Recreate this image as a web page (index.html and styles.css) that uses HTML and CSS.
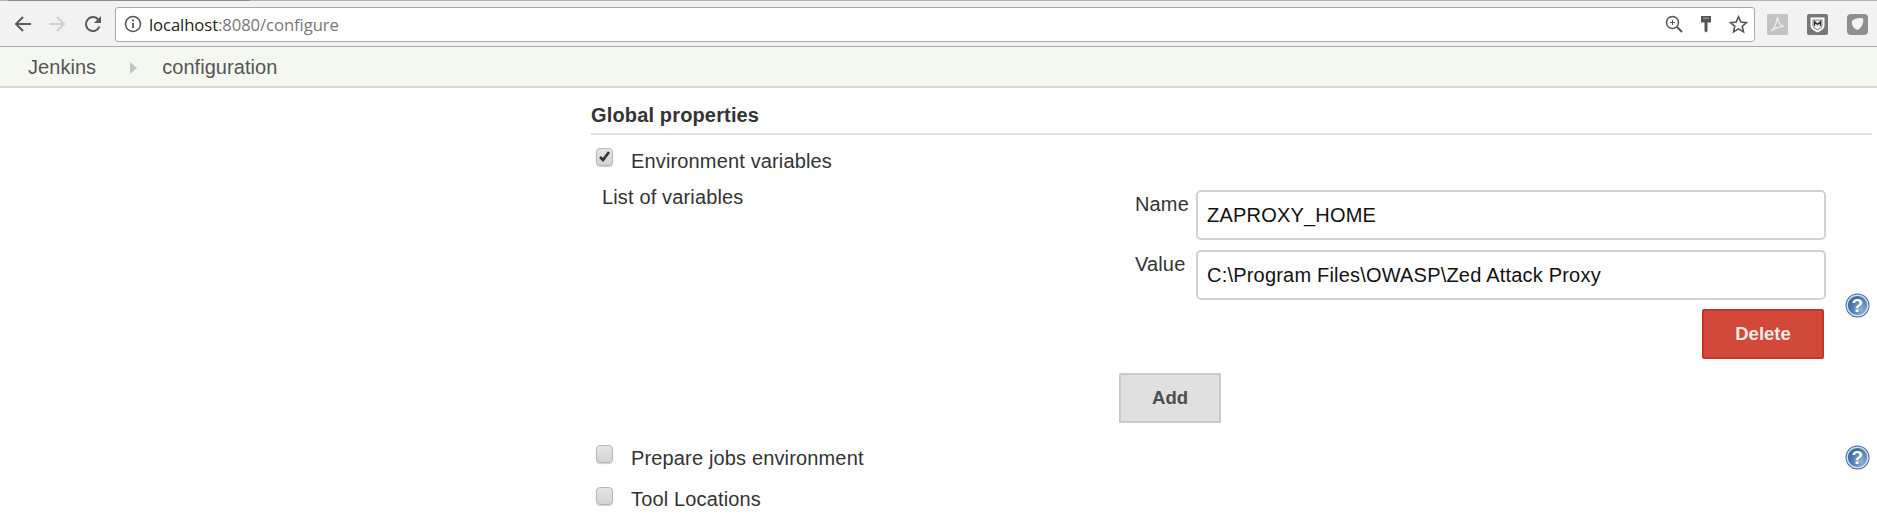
FILE: index.html
```html
<!DOCTYPE html>
<html lang="en">
<head>
<meta charset="utf-8">
<title>Jenkins configuration</title>
<link rel="stylesheet" href="styles.css">
</head>
<body>
<div class="tabstrip"><div class="tab-edge"></div></div>
<div class="toolbar">
  <svg class="nav" width="20" height="20" viewBox="0 0 20 20"><path d="M18 10H4M10 3l-7 7 7 7" fill="none" stroke="#5a5a5a" stroke-width="2"/></svg>
  <svg class="nav nav-fwd" width="20" height="20" viewBox="0 0 20 20"><path d="M2 10h14M10 3l7 7-7 7" fill="none" stroke="#cfcfcf" stroke-width="2"/></svg>
  <svg class="nav nav-reload" width="20" height="20" viewBox="0 0 20 20"><path d="M16.5 12.5A7 7 0 1 1 15 5.2" fill="none" stroke="#5a5a5a" stroke-width="2"/><path d="M18 2v7h-7z" fill="#5a5a5a"/></svg>
  <div class="omnibox">
    <svg class="info" width="18" height="18" viewBox="0 0 18 18"><circle cx="9" cy="9" r="7.5" fill="none" stroke="#555" stroke-width="1.6"/><path d="M9 8v5" stroke="#555" stroke-width="1.8"/><circle cx="9" cy="5.4" r="1.1" fill="#555"/></svg>
    <span class="url"><span class="host">localhost</span>:8080/configure</span>
    <span class="omni-icons">
      <svg width="18" height="18" viewBox="0 0 18 18"><circle cx="7.5" cy="7.5" r="6" fill="none" stroke="#555" stroke-width="1.5"/><path d="M12 12l5 5" stroke="#555" stroke-width="2"/><path d="M5 7.5h5M7.5 5v5" stroke="#555"/></svg>
      <svg width="12" height="18" viewBox="0 0 12 18"><path d="M1 1h10v6.500H7.500V16L6 17.500 4.500 16V7.500H1z" fill="#555"/><path d="M3 3.200h6" stroke="#aaa"/></svg>
      <svg width="19" height="19" viewBox="0 0 19 19"><path d="M9.500 1.800l2.300 5.200 5.700.6-4.300 3.700 1.300 5.600-5-3-5 3 1.300-5.600L1.500 7.600l5.700-.6z" fill="none" stroke="#555" stroke-width="1.600"/></svg>
    </span>
  </div>
  <div class="extensions">
    <svg width="21" height="21" viewBox="0 0 21 21"><rect width="21" height="21" rx="1" fill="#c4c4c4"/><path d="M4 17c3-2 5-6 6-12 0-2 1-2 1 0 0 4 3 7 6 7.500-4 0-8 1-13 4.500z" fill="none" stroke="#f2f2f2" stroke-width="1.200"/></svg>
    <svg width="21" height="21" viewBox="0 0 21 21"><rect width="21" height="21" rx="2" fill="#777"/><path d="M3.500 3.500h14v8c0 3-3 5-7 7-4-2-7-4-7-7z" fill="#fff"/><path d="M5.500 5.500h10v6c0 2-2 3.500-5 5-3-1.500-5-3-5-5z" fill="#888"/><path d="M6.500 6.500h8v5c0 1.500-1.500 2.500-4 4-2.500-1.500-4-2.500-4-4z" fill="#eee"/><path d="M7.500 12V7.500l3 3 3-3V12" fill="none" stroke="#333" stroke-width="1.300"/></svg>
    <svg width="21" height="21" viewBox="0 0 21 21"><rect width="21" height="21" rx="4" fill="#8e8e8e"/><path d="M5 7c2-2.500 8-4 11-2.500 1 4-1 9-5.500 11.500C7 15 4 11 5 7z" fill="#f4f4f4"/></svg>
  </div>
</div>
<nav class="breadcrumbs">
  <a class="crumb">Jenkins</a>
  <svg class="crumb-sep" width="7" height="12" viewBox="0 0 7 12"><path d="M0 0l7 6-7 6z" fill="#c4c4c4"/></svg>
  <a class="crumb">configuration</a>
</nav>
<main class="main">
  <h2 class="section-title">Global properties</h2>
  <label class="check-row check-row-first">
    <span class="checkbox"><svg width="17" height="17" viewBox="0 0 17 17"><path d="M4 9l3 3 6-8" fill="none" stroke="#333" stroke-width="2.600"/></svg></span>
    <span class="check-label">Environment variables</span>
  </label>
  <div class="env-grid">
    <div class="vars-label">List of variables</div>
    <div class="vars-fields">
      <div class="field">
        <label class="field-label">Name</label>
        <input class="text-input" type="text" value="ZAPROXY_HOME">
      </div>
      <div class="field field-last">
        <label class="field-label">Value</label>
        <input class="text-input" type="text" value="C:\Program Files\OWASP\Zed Attack Proxy">
      </div>
      <div class="delete-row"><button class="btn btn-delete">Delete</button></div>
      <button class="btn btn-add">Add</button>
    </div>
    <div class="help help-env">
      <svg class="help-icon" width="25" height="25" viewBox="0 0 25 25"><defs><radialGradient id="hg" cx="0.7" cy="0.7" r="0.9"><stop offset="0" stop-color="#8fb0d6"/><stop offset="1" stop-color="#1f4f8f"/></radialGradient></defs><circle cx="12.500" cy="12.500" r="12" fill="#3a68a4"/><circle cx="12.500" cy="12.500" r="10.300" fill="url(#hg)" stroke="#cfdcea" stroke-width="1.500"/><text x="12.500" y="19" class="help-mark">?</text></svg>
    </div>
  </div>
  <div class="option-row option-row-help">
    <label class="check-row">
      <span class="checkbox"></span>
      <span class="check-label">Prepare jobs environment</span>
    </label>
    <svg class="help-icon" width="25" height="25" viewBox="0 0 25 25"><circle cx="12.500" cy="12.500" r="12" fill="#3a68a4"/><circle cx="12.500" cy="12.500" r="10.300" fill="url(#hg)" stroke="#cfdcea" stroke-width="1.500"/><text x="12.500" y="19" class="help-mark">?</text></svg>
  </div>
  <label class="check-row check-row-last">
    <span class="checkbox"></span>
    <span class="check-label">Tool Locations</span>
  </label>
</main>
</body>
</html>
```
FILE: styles.css
```css
* { box-sizing: border-box; }
html, body { margin: 0; padding: 0; background: #fff; }
body {
  width: 1877px;
  height: 526px;
  overflow: hidden;
  font-family: "Liberation Sans", Arial, sans-serif;
  font-size: 20px;
  letter-spacing: 0.15px;
  color: #333;
}
.tabstrip { height: 1px; background: #b4b4b4; padding-left: 8px; }
.tab-edge { width: 242px; height: 1px; background: #8c8c8c; }
.toolbar {
  height: 46px;
  background: #f2f2f2;
  border-bottom: 1px solid #ababab;
  display: flex;
  align-items: center;
  padding-left: 13px;
  padding-top: 1px;
}
.nav { flex: none; }
.nav-fwd { margin-left: 14px; }
.nav-reload { margin-left: 16px; }
.omnibox {
  margin-left: 12px;
  width: 1640px;
  height: 35px;
  background: #fff;
  border: 1px solid #a9a9a9;
  border-radius: 3px;
  display: flex;
  align-items: center;
  padding-left: 8px;
  padding-right: 6px;
}
.url {
  margin-left: 7px;
  font-family: "Open Sans", "Liberation Sans", sans-serif;
  font-size: 16.700px;
  color: #777;
  letter-spacing: -0.1px;
}
.host { color: #222; }
.omni-icons {
  margin-left: auto;
  display: flex;
  align-items: center;
  gap: 17px;
}
.extensions {
  margin-left: 12px;
  display: flex;
  gap: 19px;
}
.breadcrumbs {
  height: 41px;
  background: #f5f8f1;
  border-bottom: 2px solid #d8d9d2;
  display: flex;
  align-items: center;
  padding-left: 28px;
  padding-top: 2px;
}
.crumb { color: #555; font-size: 20px; letter-spacing: 0.05px; }
.crumb-sep { margin: 0 25px 0 34px; }
.main { padding: 0 5px 0 591px; }
.section-title {
  margin: 0;
  height: 47px;
  padding-top: 16px;
  border-bottom: 2px solid #e0e0e0;
  font-size: 20px;
  line-height: 23px;
  font-weight: 700;
  color: #333;
}
.check-row { display: flex; align-items: flex-start; }
.check-row-first { margin-top: 13px; margin-left: 5px; height: 31px; }
.checkbox {
  flex: none;
  width: 17px;
  height: 18px;
  background: linear-gradient(#e6e6e6, #d2d2d2);
  border: 1px solid #b5b5b5;
  border-radius: 4px;
  box-shadow: 0 1px 1px #ccc;
  display: block;
}
.checkbox svg { display: block; margin: -1px 0 0 -1px; }
.check-label { margin-left: 18px; line-height: 23px; color: #333; }
.check-row-first .check-label { margin-top: 2px; }
.env-grid {
  display: grid;
  grid-template-columns: 528px 707px 1fr;
}
.vars-label { padding-left: 11px; padding-top: 7px; line-height: 23px; }
.vars-fields { padding-top: 11px; }
.field {
  display: flex;
  justify-content: flex-end;
  margin-bottom: 10px;
}
.field-last { margin-bottom: 9px; }
.field-label { width: 61px; padding-top: 3px; line-height: 23px; }
.text-input {
  width: 630px;
  height: 50px;
  border: 2px solid #d2d2d2;
  border-radius: 5px;
  background: #fff;
  padding: 0 9px;
  font-family: "Liberation Sans", Arial, sans-serif;
  font-size: 20px;
  letter-spacing: 0.2px;
  color: #111;
  outline: none;
}
.delete-row { display: flex; justify-content: flex-end; padding-right: 2px; }
.btn {
  display: block;
  width: 102px;
  height: 50px;
  font-family: "Liberation Sans", Arial, sans-serif;
  font-size: 18.500px;
  font-weight: 700;
  padding: 0;
}
.btn-delete {
  width: 122px;
  background: #d24939;
  border: 2px solid #c5352a;
  border-radius: 2px;
  color: #f4e8e6;
}
.btn-add {
  margin-top: 14px;
  background: #e0e0e0;
  border: 2px solid #c9c9c9;
  border-radius: 1px;
  color: #4d4d4d;
}
.help-env { padding-left: 19px; padding-top: 114px; }
.help-icon { display: block; }
.help-mark {
  font-family: "Liberation Sans", Arial, sans-serif;
  font-size: 19px;
  font-weight: 700;
  fill: #fff;
  text-anchor: middle;
}
.option-row-help {
  display: flex;
  justify-content: space-between;
  padding: 22px 2px 0 5px;
}
.option-row-help .check-label { margin-top: 2px; }
.check-row-last { margin-top: 17px; margin-left: 5px; }
.check-row-last .check-label { margin-top: 1px; }
```
